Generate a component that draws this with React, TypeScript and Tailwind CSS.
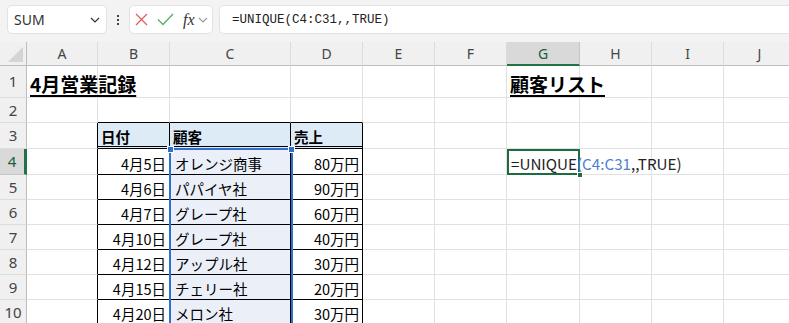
import type { ReactNode } from "react";

const cols = [
  { key: "A", w: "w-[71px]" },
  { key: "B", w: "w-[72px]" },
  { key: "C", w: "w-[121px]" },
  { key: "D", w: "w-[72px]" },
  { key: "E", w: "w-[72px]" },
  { key: "F", w: "w-[72px]" },
  { key: "G", w: "w-[73px]" },
  { key: "H", w: "w-[72px]" },
  { key: "I", w: "w-[72px]" },
  { key: "J", w: "w-[72px]" },
];

const rowHeights: Record<number, string> = {
  1: "h-[32px]",
  2: "h-[25px]",
  3: "h-[26px]",
  4: "h-[26px]",
};

const records = [
  ["4月5日", "オレンジ商事", "80万円"],
  ["4月6日", "パパイヤ社", "90万円"],
  ["4月7日", "グレープ社", "60万円"],
  ["4月10日", "グレープ社", "40万円"],
  ["4月12日", "アップル社", "30万円"],
  ["4月15日", "チェリー社", "20万円"],
  ["4月20日", "メロン社", "30万円"],
];

const cellFont = { fontFamily: '"Noto Sans CJK JP", "Noto Sans", sans-serif' };
const uiFont = { fontFamily: '"Noto Sans", "Open Sans", sans-serif' };

function Toolbar() {
  return (
    <div className="h-[42px] bg-[#f3f3f3] flex items-start pt-[5px] pl-[7px]" style={uiFont}>
      <div className="w-[100px] h-[29px] bg-white rounded-[5px] border border-[#e2e2e2] flex items-center justify-between pl-[6px] pr-[6px]">
        <span className="text-[14px] text-[#333]">SUM</span>
        <svg width="10" height="6" viewBox="0 0 10 6">
          <path d="M1 1 L5 5 L9 1" fill="none" stroke="#333" strokeWidth="1.2" />
        </svg>
      </div>
      <div className="w-[22px] h-[29px] flex flex-col items-center justify-center gap-[2px]">
        <span className="w-[2px] h-[2px] bg-[#444]" />
        <span className="w-[2px] h-[2px] bg-[#444]" />
        <span className="w-[2px] h-[2px] bg-[#444]" />
      </div>
      <div className="w-[84px] h-[29px] bg-white rounded-[5px] border border-[#e2e2e2] flex items-center pl-[5px] gap-[9px]">
        <svg width="13" height="13" viewBox="0 0 13 13">
          <path d="M1 1 L12 12 M12 1 L1 12" stroke="#e0605f" strokeWidth="1.3" fill="none" />
        </svg>
        <svg width="17" height="13" viewBox="0 0 17 13">
          <path d="M1 6.5 L6 11.5 L16 1" stroke="#5fad6b" strokeWidth="1.4" fill="none" />
        </svg>
        <div className="flex items-center gap-[3px]">
          <span
            className="text-[16px] italic text-[#333] leading-none"
            style={{ fontFamily: '"Liberation Serif", "DejaVu Serif", serif' }}
          >
            fx
          </span>
          <svg width="10" height="6" viewBox="0 0 10 6">
            <path d="M1 1 L5 5 L9 1" fill="none" stroke="#9a9a9a" strokeWidth="1.1" />
          </svg>
        </div>
      </div>
      <div className="flex-1 ml-[6px] h-[29px] bg-white rounded-l-[5px] border border-r-0 border-[#e2e2e2] flex items-center pl-[12px]">
        <span
          className="text-[12.5px] text-[#222] pt-[1px]"
          style={{ fontFamily: '"Liberation Mono", "DejaVu Sans Mono", monospace' }}
        >
          =UNIQUE(C4:C31,,TRUE)
        </span>
      </div>
    </div>
  );
}

function ColumnHeader() {
  return (
    <div className="flex h-[24px]" style={uiFont}>
      <div className="w-[27px] shrink-0 bg-[#f0f0f0] border-r border-b border-[#bdbdbd] flex items-end justify-end p-[3px]">
        <svg width="15" height="15" viewBox="0 0 15 15">
          <path d="M15 0 L15 15 L0 15 Z" fill="#d4d4d4" />
        </svg>
      </div>
      {cols.map((c) =>
        c.key === "G" ? (
          <div
            key={c.key}
            className={`${c.w} shrink-0 bg-[#d9d9d9] border-r border-[#c6c6c6] border-b-2 border-b-[#217346] flex items-center justify-center text-[14px] text-[#1f5c3a]`}
          >
            {c.key}
          </div>
        ) : (
          <div
            key={c.key}
            className={`${c.w} shrink-0 bg-[#f0f0f0] border-r border-[#dcdcdc] border-b border-b-[#bdbdbd] flex items-center justify-center text-[14px] text-[#444]`}
          >
            {c.key}
          </div>
        )
      )}
    </div>
  );
}

function RowHeader({ n }: { n: number }) {
  const active = n === 4;
  return (
    <div
      className={
        active
          ? "w-[27px] shrink-0 bg-[#d9d9d9] border-r-[3px] border-r-[#217346] border-b border-b-[#c6c6c6] flex items-center justify-center text-[15px] text-[#1f5c3a]"
          : "w-[27px] shrink-0 bg-[#f0f0f0] border-r border-r-[#bdbdbd] border-b border-b-[#dcdcdc] flex items-center justify-center text-[15px] text-[#444]"
      }
      style={uiFont}
    >
      {n}
    </div>
  );
}

function Cell({
  w,
  cls = "border-r border-b border-[#e1e1e1]",
  children,
  align = "left",
}: {
  w: string;
  cls?: string;
  children?: ReactNode;
  align?: "left" | "right";
}) {
  return (
    <div
      className={`${w} shrink-0 flex items-end pb-[3px] ${align === "right" ? "justify-end pr-[3px]" : "pl-[3px]"} ${cls}`}
    >
      {children}
    </div>
  );
}

export default function App() {
  const grid = "border-r border-b border-[#e1e1e1]";
  return (
    <div className="w-[789px] h-[323px] overflow-hidden bg-white">
      <Toolbar />
      <div className="relative w-[796px]" style={cellFont}>
        <ColumnHeader />

        {/* row 1 */}
        <div className="flex h-[32px]">
          <RowHeader n={1} />
          {cols.map((c) => (
            <Cell key={c.key} w={c.w} cls={`${grid} overflow-visible !pb-[4px]`}>
              {c.key === "A" && (
                <span className="text-[19px] font-bold underline underline-offset-[3px] decoration-[1.5px] whitespace-nowrap leading-none text-black">
                  4月営業記録
                </span>
              )}
              {c.key === "G" && (
                <span className="text-[19px] font-bold underline underline-offset-[3px] decoration-[1.5px] whitespace-nowrap leading-none text-black">
                  顧客リスト
                </span>
              )}
            </Cell>
          ))}
        </div>

        {/* row 2 */}
        <div className={`flex ${rowHeights[2]}`}>
          <RowHeader n={2} />
          {cols.map((c) => (
            <Cell
              key={c.key}
              w={c.w}
              cls={
                ["B", "C", "D"].includes(c.key)
                  ? "border-r border-r-[#e1e1e1] border-b border-b-black"
                  : grid
              }
            />
          ))}
        </div>

        {/* row 3: table header */}
        <div className={`flex ${rowHeights[3]}`}>
          <RowHeader n={3} />
          {cols.map((c) => {
            if (c.key === "A")
              return <Cell key={c.key} w={c.w} cls="border-r border-r-black border-b border-b-[#e1e1e1]" />;
            if (["B", "C", "D"].includes(c.key))
              return (
                <Cell
                  key={c.key}
                  w={c.w}
                  cls="bg-[#ddebf7] border-r border-r-black border-b-[3px] border-double border-b-black !pb-[2px]"
                >
                  <span className="text-[14.5px] font-bold leading-none text-black">
                    {c.key === "B" ? "日付" : c.key === "C" ? "顧客" : "売上"}
                  </span>
                </Cell>
              );
            return <Cell key={c.key} w={c.w} cls={grid} />;
          })}
        </div>

        {/* rows 4-10 */}
        {records.map((r, i) => {
          const n = i + 4;
          return (
            <div key={n} className={`flex ${rowHeights[n] ?? "h-[25px]"}`}>
              <RowHeader n={n} />
              {cols.map((c) => {
                if (c.key === "A")
                  return <Cell key={c.key} w={c.w} cls="border-r border-r-black border-b border-b-[#e1e1e1]" />;
                if (c.key === "B")
                  return (
                    <Cell key={c.key} w={c.w} cls="border-r border-b border-black" align="right">
                      <span className="text-[14.5px] leading-none text-black">{r[0]}</span>
                    </Cell>
                  );
                if (c.key === "C")
                  return (
                    <Cell key={c.key} w={c.w} cls="bg-[#eaeff8] border-r border-b border-black !pl-[5px]">
                      <span className="text-[14.5px] leading-none text-black">{r[1]}</span>
                    </Cell>
                  );
                if (c.key === "D")
                  return (
                    <Cell key={c.key} w={c.w} cls="border-r border-b border-black" align="right">
                      <span className="text-[14.5px] leading-none text-black">{r[2]}</span>
                    </Cell>
                  );
                if (c.key === "G" && n === 4)
                  return (
                    <Cell key={c.key} w={c.w} cls="border-2 border-[#1e6b41] !pl-[2px] !pb-[2px] overflow-visible relative z-10">
                      <span className="text-[15.2px] leading-none whitespace-nowrap text-[#222]">
                        =UNIQUE<span className="text-[#4f7fd0]">(C4:C31</span>,,TRUE)
                      </span>
                    </Cell>
                  );
                return <Cell key={c.key} w={c.w} cls={grid} />;
              })}
            </div>
          );
        })}

        {/* selection range C4:C31 */}
        <div className="absolute left-[169px] top-[106px] w-[124px] h-[200px] border-2 border-[#2e6fd1] pointer-events-none" />
        <div className="absolute left-[167px] top-[104px] w-[7px] h-[7px] bg-[#2e6fd1] border border-white" />
        <div className="absolute left-[288px] top-[104px] w-[7px] h-[7px] bg-[#2e6fd1] border border-white" />
        {/* fill handle of active cell */}
        <div className="absolute left-[577px] top-[130px] w-[6px] h-[6px] bg-[#1e6b41] border border-white z-20" />
      </div>
    </div>
  );
}
